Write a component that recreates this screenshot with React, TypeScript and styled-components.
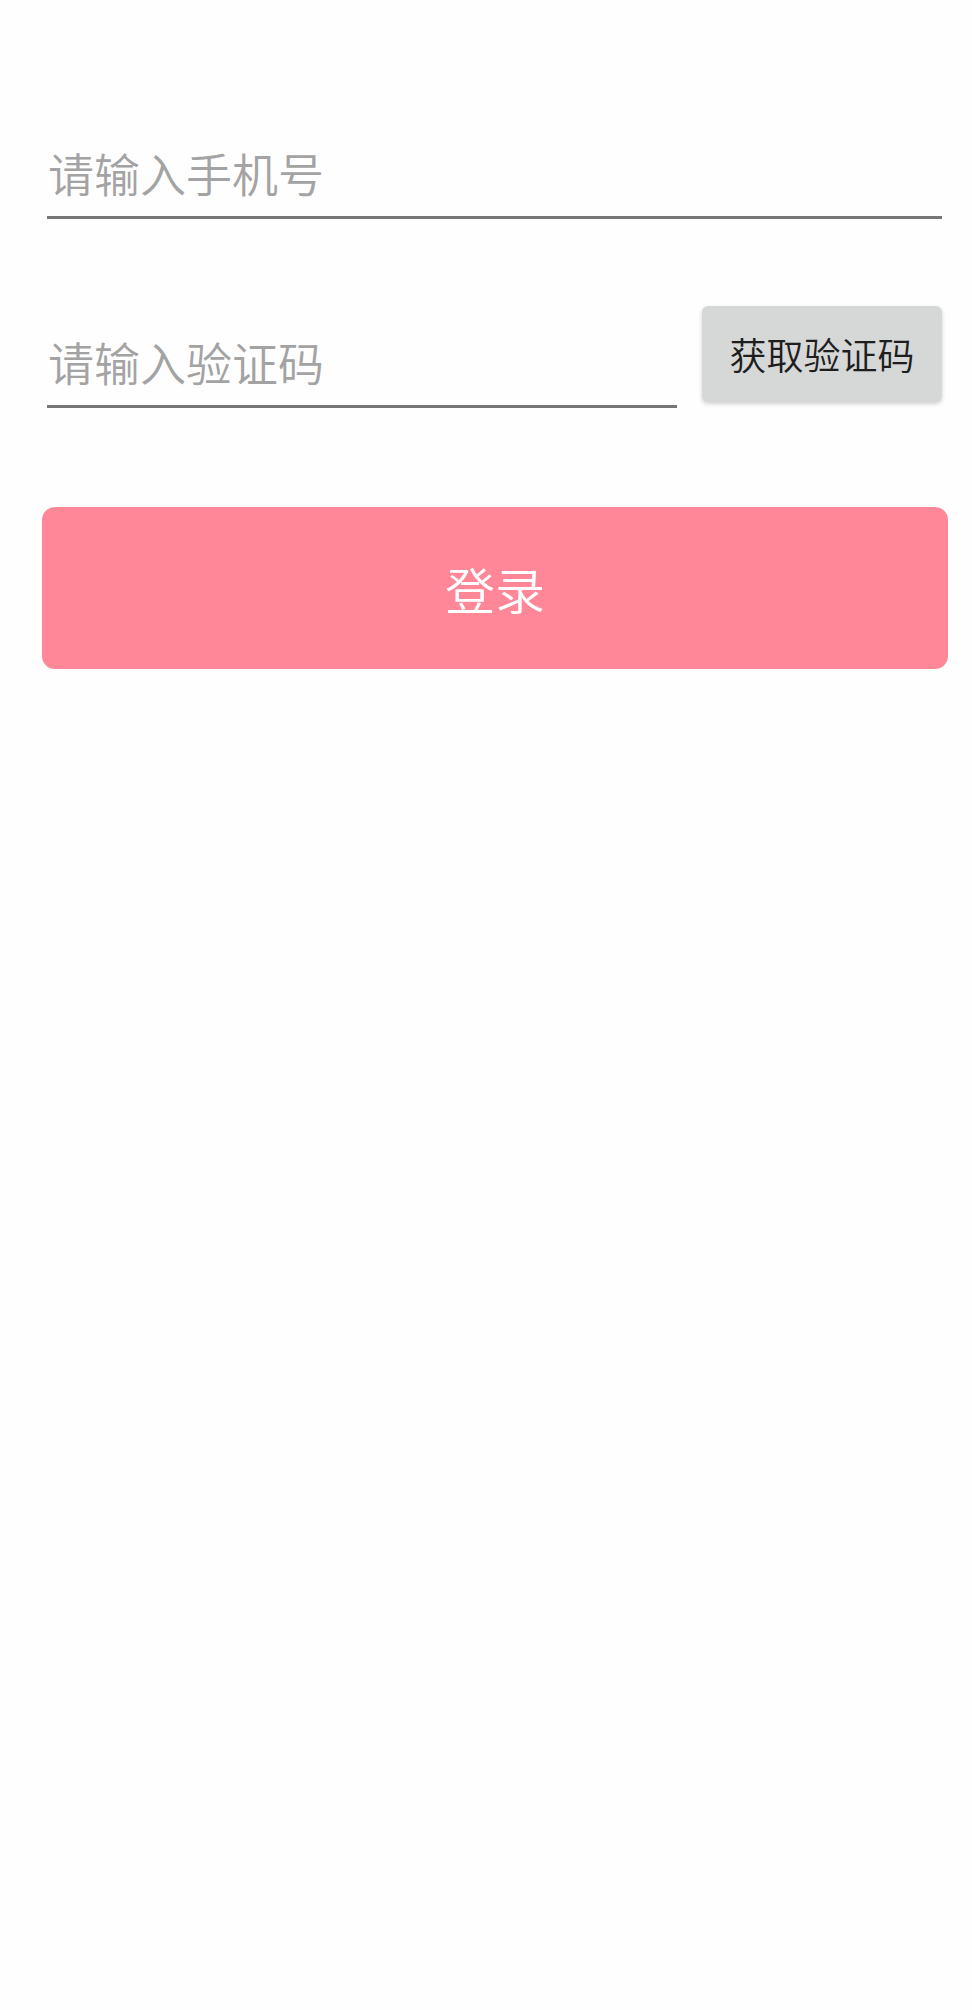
import React from 'react'
import styled, { createGlobalStyle } from 'styled-components'

const GlobalStyle = createGlobalStyle`
  html, body {
    margin: 0;
    padding: 0;
    background: #fefefe;
  }
  body {
    font-family: "Noto Sans CJK SC", "Noto Sans", sans-serif;
  }
`

const Page = styled.div`
  min-height: 100vh;
  box-sizing: border-box;
  padding: 142px 30px 0 47px;
  background: #fefefe;
`

const Field = styled.div<{ $top?: number }>`
  flex: 1;
  margin-top: ${p => p.$top || 0}px;
  padding-bottom: 14px;
  border-bottom: 3px solid #767676;
`

const Input = styled.input`
  display: block;
  width: 100%;
  height: 60px;
  box-sizing: border-box;
  padding: 0 0 0 1px;
  border: none;
  outline: none;
  background: transparent;
  font-family: inherit;
  font-size: 46px;
  font-weight: 350;
  line-height: 60px;
  color: #222;

  &::placeholder {
    color: #a3a3a3;
  }
`

const CodeRow = styled.div`
  display: flex;
  align-items: flex-start;
  gap: 25px;
  margin-top: 87px;
`

const CodeButton = styled.button`
  flex: none;
  width: 240px;
  height: 96px;
  border: none;
  border-radius: 6px;
  background: #d6d7d7;
  box-shadow: 0 2px 4px rgba(0, 0, 0, 0.18);
  font-family: inherit;
  font-size: 37px;
  font-weight: 350;
  color: #1e1e1e;
  padding: 0;
`

const LoginButton = styled.button`
  display: block;
  box-sizing: border-box;
  width: calc(100% + 11px);
  height: 162px;
  margin: 99px -6px 0 -5px;
  border: none;
  border-radius: 13px;
  background: #ff8797;
  color: #fff;
  font-family: inherit;
  font-size: 50px;
  font-weight: 350;
  padding: 0;
`

export default function App() {
  return (
    <>
      <GlobalStyle />
      <Page>
        <Field>
          <Input placeholder="请输入手机号" />
        </Field>
        <CodeRow>
          <Field $top={25}>
            <Input placeholder="请输入验证码" />
          </Field>
          <CodeButton>获取验证码</CodeButton>
        </CodeRow>
        <LoginButton>登录</LoginButton>
      </Page>
    </>
  )
}
